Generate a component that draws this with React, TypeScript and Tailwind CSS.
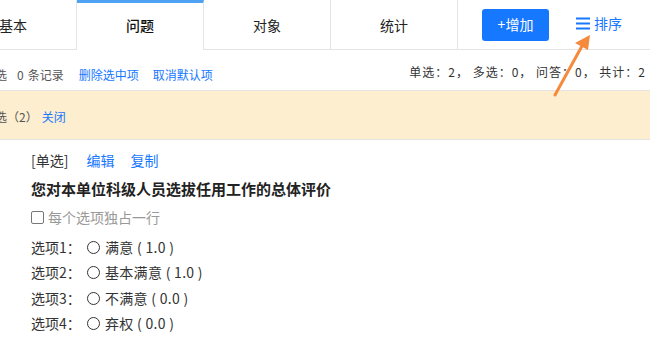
import React from "react";

const tabs = ["基本", "问题", "对象", "统计"];

const options = [
  { label: "选项1：", text: "满意 ( 1.0 )" },
  { label: "选项2：", text: "基本满意 ( 1.0 )" },
  { label: "选项3：", text: "不满意 ( 0.0 )" },
  { label: "选项4：", text: "弃权 ( 0.0 )" },
];

function SortIcon() {
  return (
    <svg width="14" height="13" viewBox="0 0 14 13" className="mr-[4px]">
      <rect x="0" y="0.5" width="14" height="2" fill="#1677ff" />
      <rect x="0" y="5.5" width="14" height="2" fill="#1677ff" />
      <rect x="0" y="10.5" width="14" height="2" fill="#1677ff" />
    </svg>
  );
}

export default function App() {
  return (
    <div
      className="relative h-[348px] w-[650px] overflow-hidden bg-white text-[#333]"
      style={{ fontFamily: '"Noto Sans CJK SC", "Noto Sans", sans-serif' }}
    >
      <div className="-ml-[50px] w-[700px]">
        {/* tabs */}
        <div className="flex h-[50px] items-stretch border-b border-[#e4e4e4]">
          {tabs.map((t) => {
            const active = t === "问题";
            return (
              <div
                key={t}
                className={
                  active
                    ? "-mb-px flex w-[127px] items-center justify-center border-r border-t-[3px] border-r-[#e4e4e4] border-t-[#4ea1f3] bg-white pb-[2px] text-[14px] font-medium text-[#111]"
                    : "flex w-[127px] items-center justify-center border-r border-[#e4e4e4] pt-[1px] text-[14px] text-[#222]"
                }
              >
                {t}
              </div>
            );
          })}
          <div className="ml-[24px] flex items-center">
            <button className="h-[32px] w-[67px] rounded-[3px] bg-[#1677ff] text-[14px] text-white">
              +增加
            </button>
          </div>
          <div className="ml-[27px] flex items-center pb-[2px] text-[14px] text-[#1677ff]">
            <SortIcon />
            排序
          </div>
        </div>

        {/* selection row */}
        <div className="flex h-[41px] items-center border-b border-[#e4e4e4] pt-[9px] text-[12px]">
          <span className="ml-[33px] flex text-[#555]">
            <span>已选</span>
            <span className="ml-[10px]">0</span>
            <span className="ml-[4px]">条记录</span>
          </span>
          <span className="ml-[15px] text-[#1677ff]">删除选中项</span>
          <span className="ml-[14px] text-[#1677ff]">取消默认项</span>
          <span className="ml-auto mr-[4px] -mt-[6px] whitespace-pre tracking-[1px] text-[#333]">
            单选：2， 多选：0， 问答：0， 共计：2
          </span>
        </div>

        {/* banner */}
        <div className="flex h-[49px] items-center border-b border-[#e4e4e4] bg-[#fdeecf] pt-[4px] text-[12px]">
          <span className="ml-[33px] text-[#555]">已选（2）</span>
          <span className="ml-[4px] text-[#1677ff]">关闭</span>
        </div>

        {/* question */}
        <div className="pl-[81px] pt-[10px] text-[14px]">
          <div className="flex h-[21px] items-center">
            <span className="text-[#333]">[单选]</span>
            <span className="ml-[18px] text-[#1677ff]">编辑</span>
            <span className="ml-[16px] text-[#1677ff]">复制</span>
          </div>
          <div className="mt-[8px] flex h-[21px] items-center text-[15px] font-bold text-[#222]">
            您对本单位科级人员选拔任用工作的总体评价
          </div>
          <div className="mt-[7px] flex h-[21px] items-center text-[#999]">
            <span className="mr-[4px] inline-block h-[13px] w-[13px] rounded-[2px] border border-[#777]" />
            每个选项独占一行
          </div>
          <div className="mt-[7px] flex flex-col">
            {options.map((o) => (
              <div key={o.label} className="flex h-[25.3px] items-center text-[#333]">
                <span className="w-[56px]">{o.label}</span>
                <span className="mr-[5px] inline-block h-[13px] w-[13px] rounded-full border border-[#333]" />
                <span className="tracking-[0.3px]">{o.text}</span>
              </div>
            ))}
          </div>
        </div>
      </div>

      {/* annotation arrow */}
      <svg
        className="pointer-events-none absolute left-0 top-0"
        width="650"
        height="348"
        viewBox="0 0 650 348"
      >
        <line x1="555" y1="95" x2="582" y2="46" stroke="#f58a3c" strokeWidth="3" strokeLinecap="round" />
        <polygon points="590,35 575,43 588,50" fill="#f58a3c" />
      </svg>
    </div>
  );
}
